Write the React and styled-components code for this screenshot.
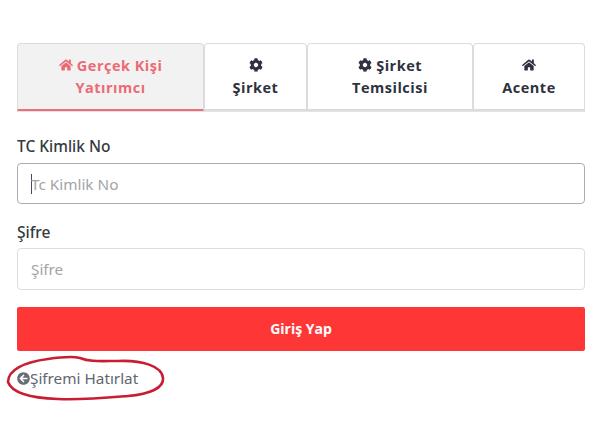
import React from "react";
import styled, { createGlobalStyle } from "styled-components";
import { FaHome, FaCog, FaArrowCircleLeft } from "react-icons/fa";

const Global = createGlobalStyle`
  html, body { margin: 0; padding: 0; background: #fff; }
  * { box-sizing: border-box; }
`;

const Page = styled.div`
  position: relative;
  width: 611px;
  height: 431px;
  padding: 43px 26px 0 17px;
  overflow: hidden;
  font-family: "Open Sans", "Liberation Sans", sans-serif;
`;

const Tabs = styled.div`
  display: flex;
  height: 69px;
  border-bottom: 1px solid #e4e4e4;
`;

const Tab = styled.div`
  width: ${(p) => p.$w}px;
  height: 68px;
  padding-top: 11px;
  border: 1px solid #dcdcdc;
  border-bottom: ${(p) => (p.$active ? "2px solid #ee6f78" : "2px solid #dcdcdc")};
  border-radius: 4px 4px 0 0;
  background: ${(p) => (p.$active ? "#f2f2f2" : "#fff")};
  color: ${(p) => (p.$active ? "#ec6a74" : "#2e3240")};
  font-size: 14.5px;
  font-weight: 700;
  line-height: 22px;
  letter-spacing: 0.5px;
  text-align: center;
  svg { width: 14px; height: 14px; vertical-align: -1px; }
`;

const Label = styled.div`
  margin-top: ${(p) => p.$top}px;
  font-family: "Noto Sans", sans-serif;
  font-size: 15.5px;
  font-weight: 500;
  line-height: 20px;
  color: #343a40;
`;

const Field = styled.div`
  position: relative;
  display: flex;
  align-items: center;
  height: ${(p) => p.$h}px;
  margin-top: ${(p) => p.$top}px;
  padding-left: 13px;
  border: 1px solid ${(p) => (p.$focus ? "#acacac" : "#dddddd")};
  border-radius: 4px;
  font-family: "Noto Sans", sans-serif;
  font-size: 15.3px;
  color: #a2a4a8;
`;

const Caret = styled.span`
  width: 1px;
  height: 20px;
  margin-right: -1px;
  background: #444c5c;
`;

const Submit = styled.button`
  display: block;
  width: 100%;
  height: 44px;
  margin-top: 17px;
  padding: 0 0 2px;
  border: none;
  border-radius: 2px;
  background: #ff3636;
  color: #fff;
  font-family: "Open Sans", sans-serif;
  font-size: 14px;
  font-weight: 700;
`;

const Forgot = styled.div`
  display: flex;
  align-items: center;
  margin-top: 17px;
  font-family: "Noto Sans", sans-serif;
  font-size: 15.3px;
  line-height: 20px;
  color: #5f6670;
  svg { width: 13px; height: 13px; color: #666d76; }
`;

const Scribble = styled.svg`
  position: absolute;
  left: 0;
  top: 0;
  pointer-events: none;
`;

export default function App() {
  return (
    <Page>
      <Global />
      <Tabs>
        <Tab $w={187} $active><FaHome /> Gerçek Kişi<br />Yatırımcı</Tab>
        <Tab $w={103}><FaCog /><br />Şirket</Tab>
        <Tab $w={166}><FaCog /> Şirket<br />Temsilcisi</Tab>
        <Tab $w={112}><FaHome /><br />Acente</Tab>
      </Tabs>
      <Label $top={24}>TC Kimlik No</Label>
      <Field $top={7} $h={41} $focus><Caret />Tc Kimlik No</Field>
      <Label $top={18}>Şifre</Label>
      <Field $top={6} $h={42}>Şifre</Field>
      <Submit>Giriş Yap</Submit>
      <Forgot><FaArrowCircleLeft />Şifremi Hatırlat</Forgot>
      <Scribble width="611" height="431" viewBox="0 0 611 431">
        <path
          d="M8 382 C8 370 24 362 48 359 C62 357 72 356 80 358 C90 362 100 361 118 361 C142 360 162 366 163 378 C164 388 150 394 128 396 C104 398 82 400 58 399 C30 398 12 393 8 382 Z"
          fill="none"
          stroke="#c81e34"
          strokeWidth="2.6"
        />
      </Scribble>
    </Page>
  );
}
